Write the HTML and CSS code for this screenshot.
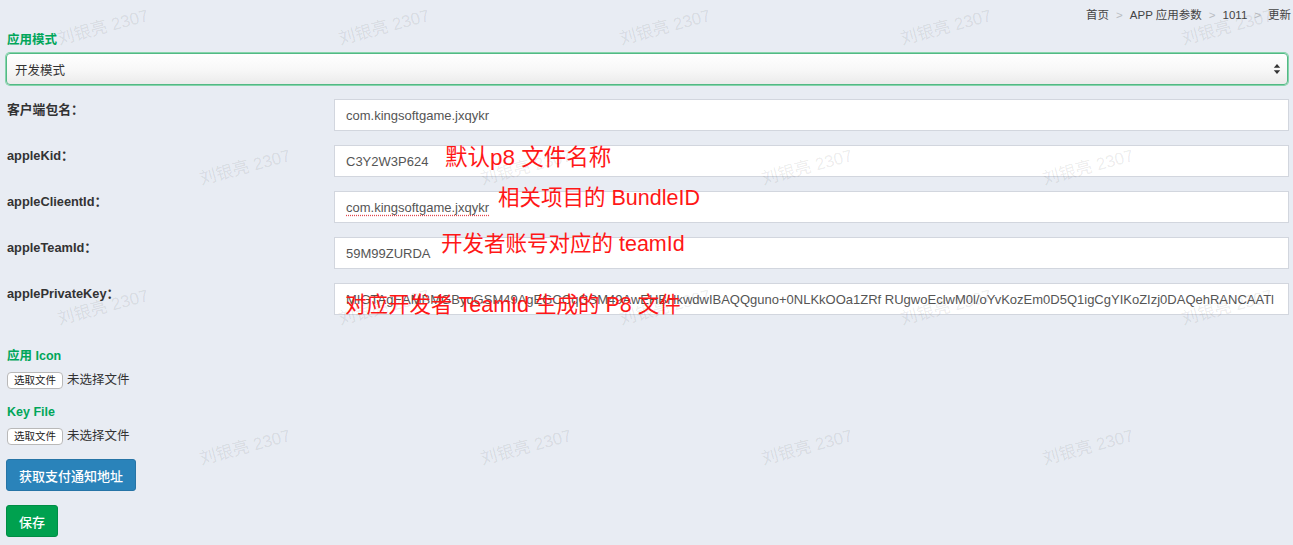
FILE: index.html
```html
<!DOCTYPE html>
<html lang="zh-CN">
<head>
<meta charset="utf-8">
<title>APP 应用参数 - 更新</title>
<link rel="stylesheet" href="styles.css">
</head>
<body>
<div class="page">
  <ol class="breadcrumb">
    <li>首页</li>
    <li class="sep">&gt;</li>
    <li>APP 应用参数</li>
    <li class="sep">&gt;</li>
    <li>1011</li>
    <li class="sep">&gt;</li>
    <li>更新</li>
  </ol>

  <div class="glabel">应用模式</div>
  <div class="select">
    <span>开发模式</span>
    <svg class="arrows" width="8" height="12" viewBox="0 0 8 12">
      <path d="M4 1 L7.2 4.8 L0.8 4.8 Z" fill="#333"/>
      <path d="M4 11 L7.2 7.2 L0.8 7.2 Z" fill="#333"/>
    </svg>
  </div>

  <div class="rows">
    <div class="row">
      <div class="rlabel">客户端包名：</div>
      <div class="control"><div class="field">com.kingsoftgame.jxqykr</div></div>
    </div>
    <div class="row">
      <div class="rlabel">appleKid：</div>
      <div class="control">
        <div class="field">C3Y2W3P624</div>
        <div class="annot a1">默认p8 文件名称</div>
      </div>
    </div>
    <div class="row">
      <div class="rlabel">appleClieentId：</div>
      <div class="control">
        <div class="field"><span class="spell">com.kingsoftgame.jxqykr</span></div>
        <div class="annot a2">相关项目的 BundleID</div>
      </div>
    </div>
    <div class="row">
      <div class="rlabel">appleTeamId：</div>
      <div class="control">
        <div class="field">59M99ZURDA</div>
        <div class="annot a3">开发者账号对应的 teamId</div>
      </div>
    </div>
    <div class="row">
      <div class="rlabel">applePrivateKey：</div>
      <div class="control">
        <div class="field">MIGTAgEAMBMGByqGSM49AgEGCCqGSM49AwEHBHkwdwIBAQQguno+0NLKkOOa1ZRf RUgwoEclwM0l/oYvKozEm0D5Q1igCgYIKoZIzj0DAQehRANCAATl</div>
        <div class="annot a4">对应开发者 TeamId 生成的 P8 文件</div>
      </div>
    </div>
  </div>

  <div class="glabel icon-label">应用 Icon</div>
  <div class="file"><span class="filebtn">选取文件</span><span class="filetext">未选择文件</span></div>

  <div class="glabel key-label">Key File</div>
  <div class="file"><span class="filebtn">选取文件</span><span class="filetext">未选择文件</span></div>

  <div class="actions">
    <button class="btn btn-primary">获取支付通知地址</button>
    <button class="btn btn-success">保存</button>
  </div>
</div>

<div class="watermarks">
  <div class="wrow wa"><span>刘银亮 2307</span><span>刘银亮 2307</span><span>刘银亮 2307</span><span>刘银亮 2307</span><span>刘银亮 2307</span></div>
  <div class="wrow wb"><span>刘银亮 2307</span><span>刘银亮 2307</span><span>刘银亮 2307</span><span>刘银亮 2307</span></div>
  <div class="wrow wa"><span>刘银亮 2307</span><span>刘银亮 2307</span><span>刘银亮 2307</span><span>刘银亮 2307</span><span>刘银亮 2307</span></div>
  <div class="wrow wb"><span>刘银亮 2307</span><span>刘银亮 2307</span><span>刘银亮 2307</span><span>刘银亮 2307</span></div>
</div>
</body>
</html>
```

FILE: styles.css
```css
html, body {
  margin: 0;
  padding: 0;
}
body {
  background: #e8ecf3;
  font-family: "Liberation Sans", "Noto Sans CJK SC", sans-serif;
  color: #333;
  font-size: 12px;
  width: 1293px;
  height: 545px;
  overflow: hidden;
  position: relative;
}
.page {
  padding: 0 4px 0 6px;
}
.breadcrumb {
  list-style: none;
  margin: 0;
  padding: 0;
  height: 30px;
  line-height: 30px;
  display: flex;
  justify-content: flex-end;
  font-size: 11.5px;
  color: #444;
  margin-right: -2px;
}
.breadcrumb .sep {
  color: #b9bcc2;
  padding: 0 7px;
}
.glabel {
  color: #00a65a;
  font-weight: bold;
  font-size: 12.5px;
  line-height: 16px;
  margin-top: 2px;
  padding-left: 1px;
}
.select {
  margin-top: 5px;
  height: 32px;
  box-sizing: border-box;
  border: 1px solid #52b985;
  box-shadow: 0 0 0 1px #86d4ab;
  border-radius: 4px;
  background: linear-gradient(#ffffff, #f7f7f7 55%, #ebebeb);
  display: flex;
  align-items: center;
  justify-content: space-between;
  padding: 0 6px 0 8px;
  font-size: 12.5px;
  color: #333;
  margin-right: 1px;
}
.rows {
  margin-top: 14px;
  display: flex;
  flex-direction: column;
  gap: 14px;
}
.row {
  display: grid;
  grid-template-columns: 328px 1fr;
}
.rlabel {
  font-weight: bold;
  font-size: 12.8px;
  line-height: 17px;
  padding-top: 2px;
  padding-left: 1px;
  color: #333;
}
.control {
  position: relative;
}
.field {
  height: 32px;
  box-sizing: border-box;
  border: 1px solid #d2d6de;
  background: #fff;
  padding: 0 11px;
  line-height: 31px;
  font-size: 13px;
  color: #555;
  white-space: nowrap;
  overflow: hidden;
}
.spell {
  text-decoration: underline dotted #e0454d;
  text-underline-offset: 3px;
}
.annot {
  position: absolute;
  color: #ff1717;
  font-size: 21.5px;
  line-height: 26px;
  white-space: nowrap;
  pointer-events: none;
}
.a1 { left: 111px; top: 0; font-size: 22.5px; }
.a2 { left: 164px; top: -6px; }
.a3 { left: 107px; top: -6px; }
.a4 { left: 11px; top: 9px; }

.icon-label {
  margin-top: 33px;
}
.key-label {
  margin-top: 15px;
}
.file {
  margin-top: 8px;
  display: flex;
  align-items: center;
  height: 17px;
}
.filebtn {
  display: inline-block;
  height: 17px;
  box-sizing: border-box;
  line-height: 15px;
  padding: 0 6px;
  font-size: 10.5px;
  color: #222;
  background: #fff;
  border: 1px solid #b9b9b9;
  border-radius: 4px;
  margin-left: 1px;
}
.filetext {
  font-size: 12.5px;
  color: #333;
  margin-left: 4px;
  position: relative;
  top: -2px;
}
.actions {
  margin-top: 14px;
  display: flex;
  flex-direction: column;
  align-items: flex-start;
  gap: 14px;
}
.btn {
  height: 32px;
  padding: 0 12px;
  border-radius: 3px;
  font-family: "Liberation Sans", "Noto Sans CJK SC", sans-serif;
  font-size: 13px;
  font-weight: 500;
  color: #fff;
  cursor: pointer;
}
.btn-primary {
  background: #2a83ba;
  border: 1px solid #2674a6;
}
.btn-success {
  background: #00a14f;
  border: 1px solid #008d45;
}

.watermarks {
  position: absolute;
  top: 0;
  left: 0;
  width: 1293px;
  height: 545px;
  overflow: hidden;
  pointer-events: none;
}
.wrow {
  display: flex;
  height: 140px;
  align-items: center;
}
.wrow:first-child {
  margin-top: -45px;
}
.wa { margin-left: -38px; }
.wb { margin-left: 104px; }
.wrow span {
  flex: 0 0 281px;
  text-align: center;
  font-size: 17px;
  color: rgba(0, 0, 0, 0.085);
  transform: rotate(-15deg);
  white-space: nowrap;
}
```
